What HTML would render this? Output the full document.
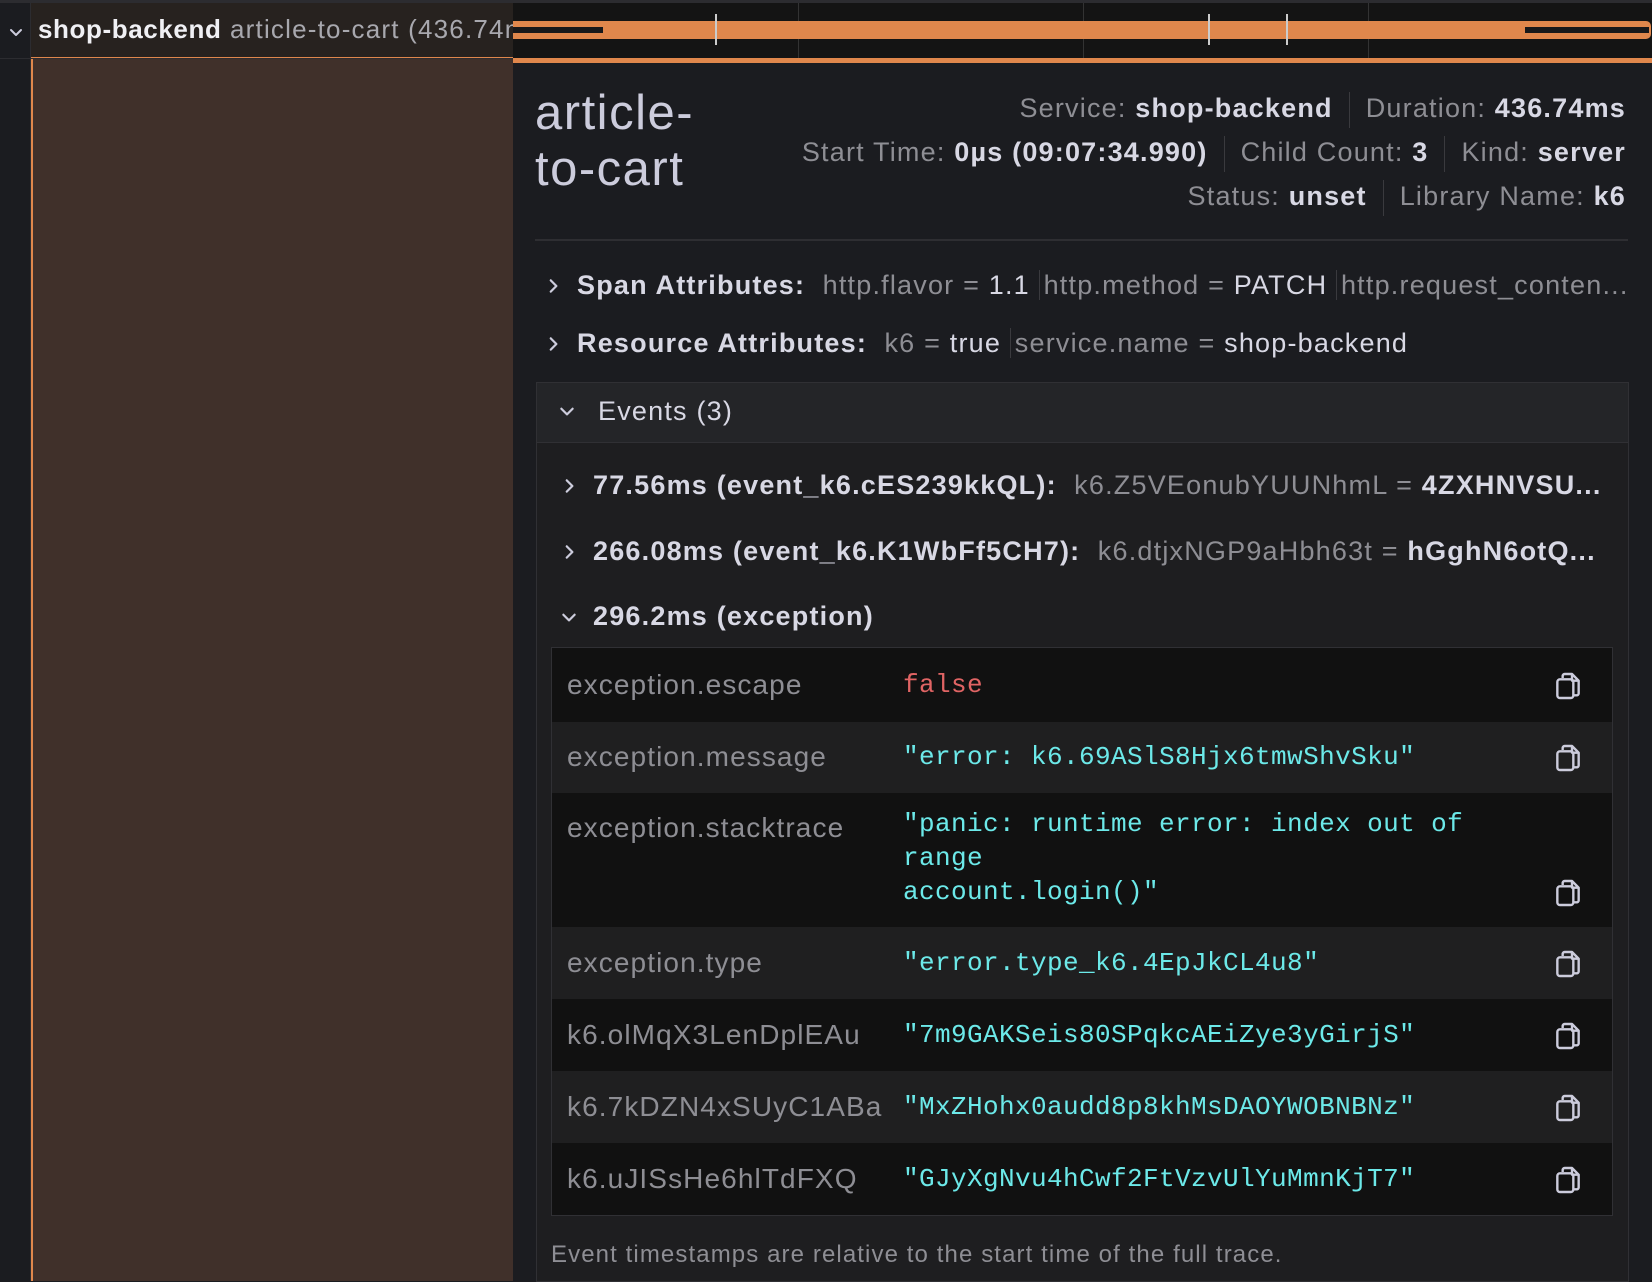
<!DOCTYPE html>
<html><head><meta charset="utf-8"><style>
*{box-sizing:border-box;margin:0;padding:0}
body{width:1652px;height:1281px;overflow:hidden;background:#1b1c20;font-family:"Liberation Sans",sans-serif;position:relative;color:#ccccdc;letter-spacing:1.2px}
.a{position:absolute;white-space:nowrap}
.lbl{color:#8e8e94}
.val{color:#d8d8e4;font-weight:bold}
.mono{font-family:"Liberation Mono",monospace;font-size:26px;color:#6ce9e9;letter-spacing:0.4px}
.row{position:absolute;left:552px;width:1060px}
.key{position:absolute;left:15px;color:#8e8e94;font-size:28px;letter-spacing:1.1px}
.v{position:absolute;left:351px}
.cp{position:absolute;left:1000px}
.sep{display:inline-block;width:1px;height:36px;background:#3a3a3e;margin:0 16px;vertical-align:middle}
</style></head><body>
<svg width="0" height="0" style="position:absolute"><defs>
<symbol id="c" viewBox="0 0 24 24"><path d="M8 6V4.5A1.5 1.5 0 0 1 9.5 3H15l5 5v9.5a1.5 1.5 0 0 1-1.5 1.5H16 M15 3v5h5" fill="none" stroke="#ccccdc" stroke-width="1.8" stroke-linejoin="round"/><rect x="4" y="7" width="12" height="14" rx="2" fill="none" stroke="#ccccdc" stroke-width="1.8"/></symbol>
<symbol id="r" viewBox="0 0 16 16"><path d="M6 3l5 5-5 5" fill="none" stroke="#ccccdc" stroke-width="2" stroke-linecap="round" stroke-linejoin="round"/></symbol>
<symbol id="d" viewBox="0 0 16 16"><path d="M3 6l5 5 5-5" fill="none" stroke="#ccccdc" stroke-width="2" stroke-linecap="round" stroke-linejoin="round"/></symbol>
</defs></svg>
<div class="a" style="left:0;top:0;width:1652px;height:3px;background:#2c2c30"></div>
<div class="a" style="left:0;top:3px;width:31px;height:1278px;background:#1b1c20;border-right:1px solid #2c2c30"></div>
<div class="a" style="left:31px;top:3px;width:482px;height:55px;background:#27221f"></div>
<svg class="a" style="left:8px;top:24px" width="16" height="16"><use href="#d"/></svg>
<div class="a" style="left:38px;top:14px;font-size:26px;font-weight:bold;color:#f0f0f4;letter-spacing:0.6px">shop-backend</div>
<div class="a" style="left:230px;top:14px;font-size:26px;color:#a8a8ae;width:283px;overflow:hidden">article-to-cart (436.74ms)</div>
<div class="a" style="left:31px;top:57px;width:482px;height:2px;background:#e0874c"></div>
<div class="a" style="left:31px;top:59px;width:482px;height:1222px;background:#40302a;border-left:2px solid #e0874c"></div>
<div class="a" style="left:0;top:58px;width:1652px;height:1px;background:#2c2c30"></div>
<div class="a" style="left:513px;top:3px;width:1139px;height:56px;background:#141414"></div>
<div class="a" style="left:798px;top:3px;width:1px;height:56px;background:#333"></div>
<div class="a" style="left:1083px;top:3px;width:1px;height:56px;background:#333"></div>
<div class="a" style="left:1368px;top:3px;width:1px;height:56px;background:#333"></div>
<div class="a" style="left:513px;top:21px;width:1138px;height:18px;background:#e0874c;border-radius:0 5px 5px 0"></div>
<div class="a" style="left:513px;top:27px;width:90px;height:6px;background:#18181a"></div>
<div class="a" style="left:1525px;top:27px;width:124px;height:6px;background:#18181a"></div>
<div class="a" style="left:715px;top:14px;width:2px;height:31px;background:#ccc"></div>
<div class="a" style="left:1208px;top:14px;width:2px;height:31px;background:#ccc"></div>
<div class="a" style="left:1286px;top:14px;width:2px;height:31px;background:#ccc"></div>
<div class="a" style="left:513px;top:58px;width:1139px;height:5px;background:#e0874c"></div>
<div class="a" style="left:535px;top:85px;font-size:49px;line-height:56px;color:#ccccdc;letter-spacing:1.5px">article-<br>to-cart</div>
<div class="a" style="right:26px;top:86px;font-size:27px;text-align:right;line-height:44px">
<div><span class="lbl">Service: </span><span class="val">shop-backend</span><span class="sep"></span><span class="lbl">Duration: </span><span class="val">436.74ms</span></div>
<div><span class="lbl">Start Time: </span><span class="val">0µs (09:07:34.990)</span><span class="sep"></span><span class="lbl">Child Count: </span><span class="val">3</span><span class="sep"></span><span class="lbl">Kind: </span><span class="val">server</span></div>
<div><span class="lbl">Status: </span><span class="val">unset</span><span class="sep"></span><span class="lbl">Library Name: </span><span class="val">k6</span></div>
</div>
<div class="a" style="left:535px;top:239px;width:1093px;height:2px;background:#2e2e32"></div>
<svg class="a" style="left:544px;top:277px" width="18" height="18"><use href="#r"/></svg>
<div class="a" style="left:577px;top:270px;font-size:27px"><span class="val">Span Attributes:</span>&nbsp; <span class="lbl">http.flavor = </span><span style="color:#d8d8e4">1.1</span> <span style="border-left:1px solid #3a3a3e;padding-left:4px" class="lbl">http.method = </span><span style="color:#d8d8e4">PATCH</span> <span style="border-left:1px solid #3a3a3e;padding-left:4px" class="lbl">http.request_conten...</span></div>
<svg class="a" style="left:544px;top:335px" width="18" height="18"><use href="#r"/></svg>
<div class="a" style="left:577px;top:328px;font-size:27px"><span class="val">Resource Attributes:</span>&nbsp; <span class="lbl">k6 = </span><span style="color:#d8d8e4">true</span> <span style="border-left:1px solid #3a3a3e;padding-left:4px" class="lbl">service.name = </span><span style="color:#d8d8e4">shop-backend</span></div>
<div class="a" style="left:536px;top:382px;width:1093px;height:900px;border:1px solid #303034;background:#1e1e20"></div>
<div class="a" style="left:537px;top:383px;width:1091px;height:60px;background:#242528;border-bottom:1px solid #303034"></div>
<svg class="a" style="left:558px;top:402px" width="18" height="18"><use href="#d"/></svg>
<div class="a" style="left:598px;top:396px;font-size:27px;color:#d8d8e4">Events (3)</div>
<svg class="a" style="left:560px;top:477px" width="18" height="18"><use href="#r"/></svg>
<div class="a" style="left:593px;top:470px;font-size:27px"><span class="val">77.56ms (event_k6.cES239kkQL):</span>&nbsp; <span class="lbl">k6.Z5VEonubYUUNhmL = </span><span class="val">4ZXHNVSU...</span></div>
<svg class="a" style="left:560px;top:543px" width="18" height="18"><use href="#r"/></svg>
<div class="a" style="left:593px;top:536px;font-size:27px"><span class="val">266.08ms (event_k6.K1WbFf5CH7):</span>&nbsp; <span class="lbl">k6.dtjxNGP9aHbh63t = </span><span class="val">hGghN6otQ...</span></div>
<svg class="a" style="left:560px;top:608px" width="18" height="18"><use href="#d"/></svg>
<div class="a" style="left:593px;top:601px;font-size:27px"><span class="val">296.2ms (exception)</span></div>
<div class="a" style="left:551px;top:647px;width:1062px;height:569px;border:1px solid #303034;background:#111"></div>
<div class="row" style="top:648px;height:74px;background:#111"><div class="key" style="top:21px">exception.escape</div><div class="v mono" style="top:22px;color:#e06464">false</div><svg class="cp" style="top:21px" width="32" height="34"><use href="#c"/></svg></div>
<div class="row" style="top:722px;height:71px;background:#1f1f20"><div class="key" style="top:19px">exception.message</div><div class="v mono" style="top:20px">"error: k6.69ASlS8Hjx6tmwShvSku"</div><svg class="cp" style="top:19px" width="32" height="34"><use href="#c"/></svg></div>
<div class="row" style="top:793px;height:134px;background:#111"><div class="key" style="top:19px">exception.stacktrace</div><div class="v mono" style="top:14px;line-height:34px">"panic: runtime error: index out of<br>range<br>account.login()"</div><svg class="cp" style="top:83px" width="32" height="34"><use href="#c"/></svg></div>
<div class="row" style="top:927px;height:72px;background:#1f1f20"><div class="key" style="top:20px">exception.type</div><div class="v mono" style="top:21px">"error.type_k6.4EpJkCL4u8"</div><svg class="cp" style="top:20px" width="32" height="34"><use href="#c"/></svg></div>
<div class="row" style="top:999px;height:72px;background:#111"><div class="key" style="top:20px">k6.olMqX3LenDplEAu</div><div class="v mono" style="top:21px">"7m9GAKSeis80SPqkcAEiZye3yGirjS"</div><svg class="cp" style="top:20px" width="32" height="34"><use href="#c"/></svg></div>
<div class="row" style="top:1071px;height:72px;background:#1f1f20"><div class="key" style="top:20px">k6.7kDZN4xSUyC1ABa</div><div class="v mono" style="top:21px">"MxZHohx0audd8p8khMsDAOYWOBNBNz"</div><svg class="cp" style="top:20px" width="32" height="34"><use href="#c"/></svg></div>
<div class="row" style="top:1143px;height:72px;background:#111"><div class="key" style="top:20px">k6.uJISsHe6hlTdFXQ</div><div class="v mono" style="top:21px">"GJyXgNvu4hCwf2FtVzvUlYuMmnKjT7"</div><svg class="cp" style="top:20px" width="32" height="34"><use href="#c"/></svg></div>
<div class="a" style="left:551px;top:1241px;font-size:24px;color:#8e8e94;letter-spacing:1.1px">Event timestamps are relative to the start time of the full trace.</div>
</body></html>
